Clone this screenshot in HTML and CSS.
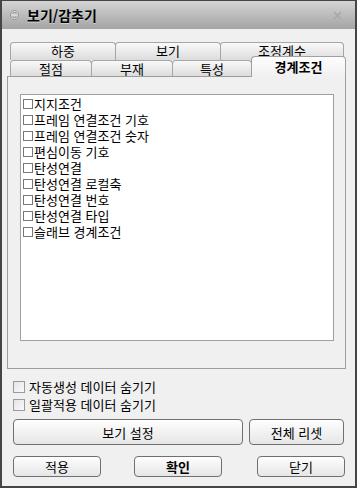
FILE: index.html
```html
<!DOCTYPE html>
<html lang="ko">
<head>
<meta charset="utf-8">
<title>보기/감추기</title>
<link rel="stylesheet" href="styles.css">
</head>
<body>
<div class="window">
  <div class="titlebar">
    <svg class="ticon" width="9" height="10" viewBox="0 0 9 10">
      <ellipse cx="4.5" cy="5" rx="4" ry="4.5" fill="#d8d8d8" stroke="#8a8a8a" stroke-width="0.8"/>
      <path d="M2.5 4 L4.5 2 L6.5 4 M2.5 6 L4.5 8 L6.5 6" fill="none" stroke="#7a7a7a" stroke-width="1"/>
    </svg>
    <span class="ttext">보기/감추기</span>
    <svg class="tclose" width="9" height="9" viewBox="0 0 9 9">
      <path d="M1 1 L8 8 M8 1 L1 8" stroke="#a8a8a8" stroke-width="1.6"/>
    </svg>
  </div>
  <div class="content">
    <div class="tabrow row1">
      <div class="tab w105">하중</div>
      <div class="tab w105">보기</div>
      <div class="tab w124">조정계수</div>
    </div>
    <div class="tabrow row2">
      <div class="tab w82">절점</div>
      <div class="tab w82">부재</div>
      <div class="tab w80">특성</div>
      <div class="tab sel">경계조건</div>
    </div>
    <div class="panel">
      <div class="list">
        <div class="item"><span class="cb"></span><span class="lbl">지지조건</span></div>
        <div class="item"><span class="cb"></span><span class="lbl">프레임 연결조건 기호</span></div>
        <div class="item"><span class="cb"></span><span class="lbl">프레임 연결조건 숫자</span></div>
        <div class="item"><span class="cb"></span><span class="lbl">편심이동 기호</span></div>
        <div class="item"><span class="cb"></span><span class="lbl">탄성연결</span></div>
        <div class="item"><span class="cb"></span><span class="lbl">탄성연결 로컬축</span></div>
        <div class="item"><span class="cb"></span><span class="lbl">탄성연결 번호</span></div>
        <div class="item"><span class="cb"></span><span class="lbl">탄성연결 타입</span></div>
        <div class="item"><span class="cb"></span><span class="lbl">슬래브 경계조건</span></div>
      </div>
    </div>
    <div class="options">
      <div class="opt"><span class="cb2"></span><span class="lbl">자동생성 데이터 숨기기</span></div>
      <div class="opt"><span class="cb2"></span><span class="lbl">일괄적용 데이터 숨기기</span></div>
    </div>
    <div class="btnrow1">
      <div class="btn big">보기 설정</div>
      <div class="btn reset">전체 리셋</div>
    </div>
    <div class="btnrow2">
      <div class="btn sm">적용</div>
      <div class="btn sm bold">확인</div>
      <div class="btn sm">닫기</div>
    </div>
  </div>
</div>
</body>
</html>
```
FILE: styles.css
```css
* { box-sizing: border-box; }
html, body { margin: 0; padding: 0; background: #f0f0f0; }
body {
  font-family: "Noto Sans CJK KR", "Noto Sans", sans-serif;
  font-size: 13px;
  color: #000;
}
.window {
  width: 357px;
  height: 488px;
  border-style: solid;
  border-color: #454545;
  border-width: 1px 2px 2px 2px;
  background: #f0f0f0;
  display: flex;
  flex-direction: column;
}
.titlebar {
  height: 28px;
  background: linear-gradient(#d4d4d4, #a4a4a4);
  display: flex;
  align-items: center;
  padding-left: 8px;
  padding-right: 13px;
}
.ticon { margin-right: 8px; }
.ttext {
  font-size: 14px;
  font-weight: bold;
  color: #000;
  text-shadow: 0 1px 0 rgba(255,255,255,0.45);
  flex: 1;
  line-height: 28px;
}
.content {
  flex: 1;
  display: flex;
  flex-direction: column;
  padding-top: 13px;
}
.tabrow { display: flex; margin-left: 8px; }
.row1 { height: 18px; }
.row2 { height: 19px; margin-top: -3px; align-items: flex-end; }
.tab {
  height: 100%;
  border: 1px solid #a6a6a6;
  border-bottom: none;
  border-radius: 4px 4px 0 0;
  background: linear-gradient(#f9f9f9, #dcdcdc);
  text-align: center;
  line-height: 16px;
  margin-right: -1px;
  color: #000;
}
.row2 .tab { height: 16px; line-height: 15px; }
.w105 { width: 106px; }
.w124 { width: 124px; }
.w82 { width: 82px; }
.w80 { width: 80px; }
.row2 .tab.sel {
  width: 95px;
  height: 21px;
  margin-bottom: -1px;
  background: linear-gradient(#fdfdfd, #f0f0f0);
  font-weight: bold;
  line-height: 20px;
  position: relative;
  z-index: 1;
  border-color: #a0a0a0;
}
.panel {
  margin-left: 5px;
  width: 339px;
  height: 293px;
  border: 1px solid #9c9c9c;
  background: #f0f0f0;
  padding: 17px 0 0 12px;
}
.list {
  width: 314px;
  height: 247px;
  background: #fff;
  border: 1px solid #a0a0a0;
  padding: 1px 0 0 2px;
}
.item {
  height: 16px;
  line-height: 16px;
  display: flex;
  align-items: center;
  white-space: nowrap;
}
.lbl {
  display: inline-block;
  height: 16px;
  line-height: 16px;
  overflow: visible;
  white-space: nowrap;
}
.cb {
  width: 10px;
  height: 10px;
  border: 1px solid #777;
  background: #fff;
  margin-right: 1px;
  flex: none;
}
.options { margin-top: 9px; padding-left: 11px; }
.opt {
  height: 18px;
  display: flex;
  align-items: center;
  white-space: nowrap;
}
.cb2 {
  width: 12px;
  height: 12px;
  border: 1px solid #9a9a9a;
  background: linear-gradient(135deg, #e4e4e4, #fafafa);
  margin-right: 4px;
  flex: none;
}
.btn {
  border: 1px solid #707070;
  border-radius: 4px;
  background: linear-gradient(#fefefe, #e6e6e6);
  display: flex;
  align-items: center;
  justify-content: center;
  color: #000;
}
.btnrow1 { display: flex; margin-top: 5px; padding-left: 11px; height: 26px; }
.big { width: 230px; height: 26px; }
.reset { width: 95px; height: 26px; margin-left: 6px; }
.btnrow2 { display: flex; margin-top: 11px; padding-left: 11px; height: 20px; }
.sm { width: 88px; height: 21px; }
.sm + .sm { margin-left: 33px; }
.sm + .sm + .sm { margin-left: 35px; }
.bold { font-weight: bold; }
```
